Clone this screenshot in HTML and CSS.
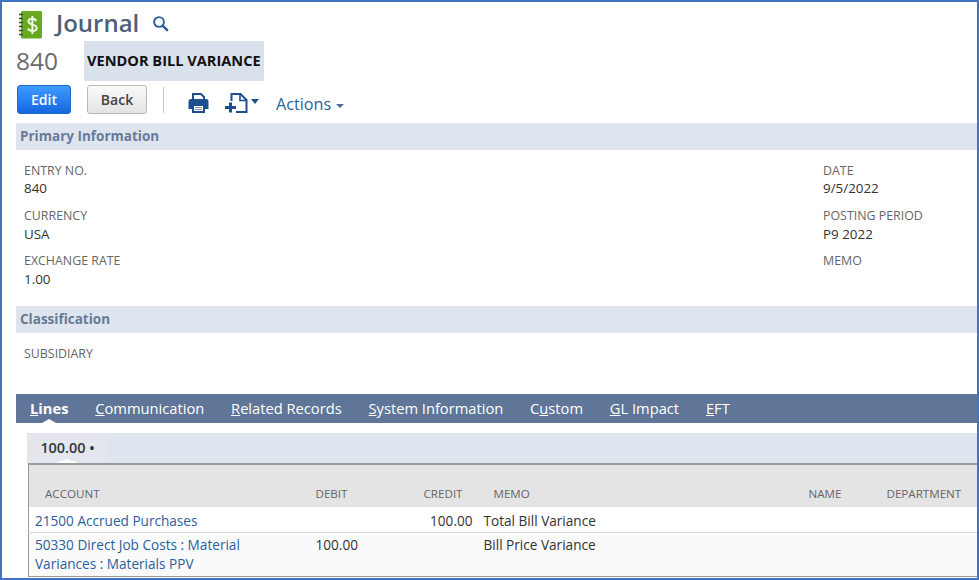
FILE: index.html
```html
<!DOCTYPE html>
<html lang="en">
<head>
<meta charset="utf-8">
<title>Journal</title>
<link rel="stylesheet" href="styles.css">
</head>
<body>
<div class="frame">
  <header class="title-row">
    <svg class="logo" width="25" height="28" viewBox="0 0 25 28">
      <rect x="3" y="0" width="21" height="27.5" rx="1.5" fill="#6aa81f"/>
      <g stroke="#35491f" stroke-width="1.5">
        <path d="M1 3.500h4M1 7.500h4M1 11.500h4M1 15.500h4M1 19.500h4M1 23.500h4"/>
      </g>
      <path d="M18.300 10c-.7-1.500-2.200-2.200-4-2.200-2.300 0-3.900 1.100-3.900 2.800 0 4 8.300 2 8.300 6.300 0 1.900-1.800 3.100-4.200 3.100-2.100 0-3.700-.9-4.500-2.500M14.400 5v18" fill="none" stroke="#eef7e0" stroke-width="2"/>
    </svg>
    <h1 class="title">Journal</h1>
    <svg class="search" width="17" height="17" viewBox="0 0 17 17">
      <circle cx="7" cy="7" r="4.900" fill="none" stroke="#2c5c9c" stroke-width="1.900"/>
      <path d="M10.600 10.600l4.600 4.600" stroke="#2c5c9c" stroke-width="2.400" stroke-linecap="round"/>
    </svg>
  </header>
  <div class="record-row">
    <span class="record-no">840</span>
    <span class="record-name">VENDOR BILL VARIANCE</span>
  </div>
  <div class="toolbar">
    <button class="btn btn-primary">Edit</button>
    <button class="btn btn-secondary">Back</button>
    <span class="divider"></span>
    <svg class="print" width="21" height="20" viewBox="0 0 21 20">
      <path d="M5 1h8l3 3v3H5z" fill="#fff" stroke="#1f4e8f" stroke-width="2"/>
      <path d="M3 6h15a2.500 2.500 0 0 1 2.500 2.500V16H17v-4.500H4V16H.5V8.500A2.500 2.500 0 0 1 3 6z" fill="#1f4e8f"/>
      <path d="M5 12h11v7H5z" fill="#fff" stroke="#1f4e8f" stroke-width="2"/>
      <path d="M7 14.500h7M7 16.500h7" stroke="#7f9abf" stroke-width="1"/>
    </svg>
    <span class="new-group">
      <svg class="newdoc" width="23" height="20" viewBox="0 0 23 20">
        <path d="M6.500 8V1h9l6 6v12H11" fill="none" stroke="#1f4e8f" stroke-width="2"/>
        <path d="M15 1v6.500h6.500" fill="none" stroke="#1f4e8f" stroke-width="1.600"/>
        <path d="M5.500 9.500v10M0 14.500h11" stroke="#1f4e8f" stroke-width="3"/>
      </svg>
      <span class="caret caret-dark"></span>
    </span>
    <span class="actions">Actions<span class="caret caret-mid"></span></span>
  </div>
  <section class="band">Primary Information</section>
  <div class="fields">
    <div class="field-col">
      <div class="field"><div class="label">ENTRY NO.</div><div class="value value-first">840</div></div>
      <div class="field"><div class="label">CURRENCY</div><div class="value">USA</div></div>
      <div class="field"><div class="label">EXCHANGE RATE</div><div class="value">1.00</div></div>
    </div>
    <div class="field-col field-col-right">
      <div class="field"><div class="label">DATE</div><div class="value value-first">9/5/2022</div></div>
      <div class="field"><div class="label">POSTING PERIOD</div><div class="value">P9 2022</div></div>
      <div class="field"><div class="label">MEMO</div></div>
    </div>
  </div>
  <section class="band band-class">Classification</section>
  <div class="fields fields-class">
    <div class="label">SUBSIDIARY</div>
  </div>
  <nav class="tabs">
    <span class="tab tab-active"><u>L</u>ines</span>
    <span class="tab"><u>C</u>ommunication</span>
    <span class="tab"><u>R</u>elated Records</span>
    <span class="tab"><u>S</u>ystem Information</span>
    <span class="tab">C<u>u</u>stom</span>
    <span class="tab"><u>G</u>L Impact</span>
    <span class="tab"><u>E</u>FT</span>
  </nav>
  <div class="panel">
    <div class="subtabs"><span class="subtab">100.00 •</span></div>
    <table class="lines">
      <colgroup>
        <col class="c-account"><col class="c-debit"><col class="c-credit"><col class="c-memo"><col class="c-name"><col class="c-dept">
      </colgroup>
      <thead>
        <tr><th>ACCOUNT</th><th>DEBIT</th><th class="num">CREDIT</th><th>MEMO</th><th>NAME</th><th>DEPARTMENT</th></tr>
      </thead>
      <tbody>
        <tr><td><a>21500 Accrued Purchases</a></td><td></td><td class="num">100.00</td><td>Total Bill Variance</td><td></td><td></td></tr>
        <tr class="alt"><td><a>50330 Direct Job Costs : Material Variances : Materials PPV</a></td><td>100.00</td><td></td><td>Bill Price Variance</td><td></td><td></td></tr>
      </tbody>
    </table>
  </div>
</div>
</body>
</html>
```
FILE: styles.css
```css
* { box-sizing: border-box; }
html, body { margin: 0; height: 100%; }
body { background: #fff; font-family: "Open Sans", sans-serif; overflow: hidden; }
.frame { width: 979px; height: 580px; border: 2px solid #4472c4; padding: 0 0 0 14px; overflow: hidden; }
.title-row { display: flex; align-items: center; height: 38px; padding-left: 2px; }
.logo { margin-right: 13px; margin-top: 7px; }
.title { margin: 4px 13px 0 0; font-size: 24px; line-height: 38px; font-weight: 600; color: #4d5f79; }
.search { margin-top: 4px; }
.record-row { display: flex; align-items: center; height: 40px; margin-top: 1px; }
.record-no { width: 68px; font-size: 24.500px; color: #6b6b6b; margin-top: -2px; }
.record-name { height: 40px; width: 180px; padding: 0 3px; background: #d8e1ec; line-height: 39px; font-size: 14.600px; font-weight: 700; color: #111; white-space: nowrap; }
.toolbar { display: flex; align-items: center; height: 29px; margin-top: 4px; padding-left: 1px; }
.btn { height: 29px; border-radius: 3px; font: 600 14px "Open Sans", sans-serif; padding: 0; }
.btn-primary { width: 54px; background: linear-gradient(#3f9bff, #1467e0); border: 1px solid #1a67c9; color: #fff; }
.btn-secondary { width: 60px; margin-left: 16px; background: linear-gradient(#fafafa, #e3e3e3); border: 1px solid #b9b9b9; color: #444; }
.divider { width: 1px; height: 26px; background: #c8c8c8; margin-left: 16px; }
.print { margin-left: 24px; margin-top: 6px; }
.new-group { display: flex; align-items: center; margin-left: 16px; margin-top: 6px; }
.caret { display: inline-block; width: 0; height: 0; border-left: 4.500px solid transparent; border-right: 4.500px solid transparent; border-top: 5px solid; }
.caret-dark { color: #1f4e8f; margin-left: 3px; margin-top: -3px; }
.caret-mid { color: #4a6a9a; margin-left: 5px; border-left-width: 4px; border-right-width: 4px; border-top-width: 4px; vertical-align: 2px; }
.actions { margin-left: 17px; font-size: 16.200px; color: #2b5f9e; margin-top: 9px; }
.band { height: 27px; margin-top: 9px; background: #dfe5ef; padding-left: 4px; font-size: 13.500px; line-height: 27px; font-weight: 700; color: #677a97; }
.band-class { margin-top: 0; }
.fields { display: flex; justify-content: space-between; height: 156px; padding: 12px 0 0 8px; }
.field-col-right { width: 154px; }
.field { height: 45px; }
.label { font-size: 12.400px; line-height: 17px; color: #666; }
.value { font-size: 13.400px; line-height: 20px; color: #333; }
.value-first { margin-top: -1px; }
.fields-class { display: block; height: 61px; padding-top: 12px; }
.tabs { display: flex; height: 29px; background: #5f7698; padding-left: 14px; gap: 26.800px; }
.tab { position: relative; font-size: 14.700px; line-height: 29px; color: #fff; white-space: nowrap; }
.tab-active { font-weight: 700; }
.tab-active::after { content: ""; position: absolute; left: 50%; bottom: 0; margin-left: -7px; border-left: 7px solid transparent; border-right: 7px solid transparent; border-bottom: 4px solid #fff; }
.panel { padding: 10px 0 0 11px; }
.subtabs { height: 30px; background: #dfe5ef; }
.subtab { position: relative; display: inline-block; width: 80px; height: 29px; padding-left: 1px; background: #e3e6ec; text-align: center; font-size: 14.400px; line-height: 29px; font-weight: 600; color: #2b3644; }
.subtab::after { content: ""; position: absolute; left: 50%; bottom: -1px; margin-left: -11px; border-left: 11px solid transparent; border-right: 11px solid transparent; border-bottom: 4px solid #fff; }
.lines { width: 949px; table-layout: fixed; border-collapse: collapse; border: 1px solid #9a9a9a; border-right: 0; border-top-width: 2px; margin-left: 1px; }
.c-account { width: 287px; }
.c-debit { width: 74px; }
.c-credit { width: 88px; }
.c-memo { width: 315px; }
.c-name { width: 78px; }
.c-dept { width: 107px; }
.lines th { height: 43px; background: #e4e4e4; padding: 15px 0 0 16px; text-align: left; font-size: 11.600px; line-height: 22px; font-weight: 400; color: #666; white-space: nowrap; }
.lines th.num { text-align: right; padding-right: 15px; padding-left: 0; }
.lines th:nth-child(2) { padding-left: 0; }
.lines td { padding: 4px 0 0 6px; height: 25px; vertical-align: top; font-size: 13.600px; line-height: 19px; color: #333; }
.lines td:first-child { padding-right: 20px; }
.lines td:nth-child(2) { padding-left: 0; }
.lines td.num { text-align: right; padding-right: 5px; padding-left: 0; }
.lines tr.alt td { height: 44px; padding-top: 2px; background: #fafafa; border-top: 1px solid #ddd; }
.lines a { color: #2b5f9e; }
```
